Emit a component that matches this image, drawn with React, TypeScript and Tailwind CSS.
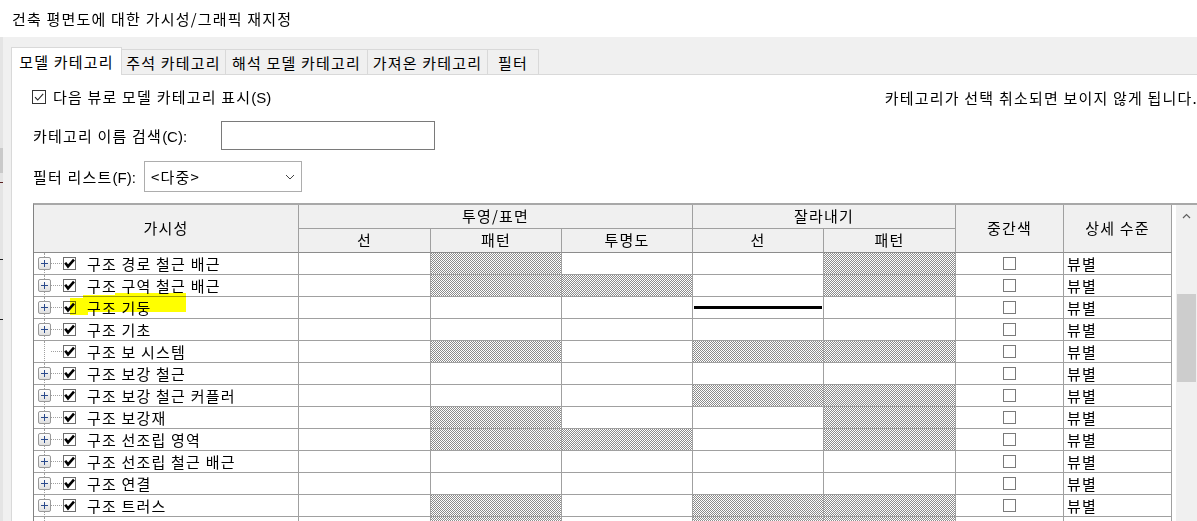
import React from "react";

type Row = {
  name: string;
  plus: boolean;
  hatch: number[];
  line?: boolean;
  mark?: boolean;
};

const rows: Row[] = [
  { name: "구조 경로 철근 배근", plus: true, hatch: [0, 1, 0, 0, 1] },
  { name: "구조 구역 철근 배근", plus: true, hatch: [0, 1, 1, 0, 1] },
  { name: "구조 기둥", plus: true, hatch: [0, 0, 0, 0, 0], line: true, mark: true },
  { name: "구조 기초", plus: true, hatch: [0, 0, 0, 0, 0] },
  { name: "구조 보 시스템", plus: false, hatch: [0, 1, 0, 1, 1] },
  { name: "구조 보강 철근", plus: true, hatch: [0, 0, 0, 0, 0] },
  { name: "구조 보강 철근 커플러", plus: true, hatch: [0, 0, 0, 1, 1] },
  { name: "구조 보강재", plus: true, hatch: [0, 1, 0, 0, 1] },
  { name: "구조 선조립 영역", plus: true, hatch: [0, 1, 1, 0, 1] },
  { name: "구조 선조립 철근 배근", plus: true, hatch: [0, 0, 0, 0, 0] },
  { name: "구조 연결", plus: true, hatch: [0, 0, 0, 0, 0] },
  { name: "구조 트러스", plus: true, hatch: [0, 1, 0, 1, 1] },
  { name: "구조 프레임", plus: true, hatch: [0, 1, 0, 1, 1] },
];

const cols = "grid grid-cols-[265px_132px_131px_131px_131px_132px_108px_108px]";
const cell = "border-r border-b border-[#a0a0a0]";
const latin = "tracking-normal font-['Liberation_Sans',sans-serif]";

const tabs = [
  { label: "모델 카테고리", w: "w-[111px]", active: true },
  { label: "주석 카테고리", w: "w-[105px]" },
  { label: "해석 모델 카테고리", w: "w-[143px]" },
  { label: "가져온 카테고리", w: "w-[121px]" },
  { label: "필터", w: "w-[52px]" },
];

const PlusBox = () => (
  <div className="w-[13px] h-[13px] border border-[#999] rounded-[2px] bg-gradient-to-b from-[#fdfdfd] to-[#e0e0e0] flex items-center justify-center">
    <svg width="9" height="9" viewBox="0 0 9 9">
      <path d="M4.5 1v7M1 4.5h7" stroke="#2a4a8c" strokeWidth="1" shapeRendering="crispEdges" />
    </svg>
  </div>
);

const RowCheck = () => (
  <div className="w-[13px] h-[13px] border border-[#6d6d6d] bg-white relative">
    <svg width="13" height="13" viewBox="0 0 13 13" className="absolute -left-[1px] -top-[1px]">
      <path d="M2.2 5.8L5 9.4L11 2.6" fill="none" stroke="#000" strokeWidth="2.6" />
    </svg>
  </div>
);

const Hatch = () => (
  <svg className="absolute inset-0 w-full h-full">
    <rect width="100%" height="100%" fill="url(#chk)" />
  </svg>
);

export default function App() {
  return (
    <div className="w-[1197px] h-[521px] overflow-hidden bg-white flex flex-col text-[15px] text-black tracking-[1.2px] font-['Noto_Sans_CJK_KR','Noto_Sans',sans-serif]">
      <svg width="0" height="0" className="absolute">
        <defs>
          <pattern id="chk" width="2" height="2" patternUnits="userSpaceOnUse">
            <rect width="2" height="2" fill="#ffffff" />
            <rect width="1" height="1" fill="#8c8c8c" />
            <rect x="1" y="1" width="1" height="1" fill="#8c8c8c" />
          </pattern>
        </defs>
      </svg>

      {/* title */}
      <div className="h-[37px] shrink-0 flex items-center pl-[12px] bg-white leading-none">
        건축 평면도에 대한 가시성/그래픽 재지정
      </div>

      <div className="flex-1 flex bg-[#f0f0f0] min-h-0">
        {/* strip of the window behind */}
        <div className="w-[11px] shrink-0 flex">
          <div className="w-[3px] bg-[#e4e4e4] flex flex-col">
            <div className="h-[111px]" />
            <div className="h-[25px] bg-[#c9c9c9]" />
            <div className="h-[9px]" />
            <div className="h-[1px] bg-[#5a2020]" />
            <div className="h-[76px]" />
            <div className="h-[1px] bg-[#202020]" />
            <div className="h-[59px]" />
            <div className="h-[1px] bg-[#202020]" />
          </div>
          <div className="flex-1" />
        </div>

        <div className="flex-1 flex flex-col min-w-0">
          {/* tabs */}
          <div className="h-[37px] shrink-0 flex items-end relative z-10">
            {tabs.map((t) =>
              t.active ? (
                <div
                  key={t.label}
                  className={`${t.w} h-[28px] -mb-[1px] bg-white border border-b-0 border-[#d9d9d9] flex items-center justify-center pb-[1px] leading-none whitespace-nowrap`}
                >
                  {t.label}
                </div>
              ) : (
                <div
                  key={t.label}
                  className={`${t.w} h-[25px] -ml-[1px] bg-[#f0f0f0] border border-b-0 border-[#d9d9d9] flex items-center justify-center leading-none whitespace-nowrap`}
                >
                  {t.label}
                </div>
              )
            )}
          </div>

          {/* panel */}
          <div className="flex-1 bg-white border-l border-t border-[#d9d9d9] flex flex-col min-h-0">
            <div className="mt-[11px] h-[22px] flex items-center justify-between -mr-[1px]">
              <div className="flex items-center pl-[20px] gap-[7px]">
                <div className="w-[14px] h-[14px] border border-[#333] bg-white flex items-center justify-center">
                  <svg width="12" height="12" viewBox="0 0 12 12">
                    <path d="M2 6.2L4.7 9L10.2 2.8" fill="none" stroke="#222" strokeWidth="1.1" />
                  </svg>
                </div>
                <span className="leading-none whitespace-nowrap">
                  다음 뷰로 모델 카테고리 표시<span className={latin}>(S)</span>
                </span>
              </div>
              <span className="leading-none whitespace-nowrap">카테고리가 선택 취소되면 보이지 않게 됩니다.</span>
            </div>

            <div className="mt-[13px] h-[29px] flex items-center pl-[21px]">
              <span className="w-[188px] shrink-0 leading-none whitespace-nowrap">
                카테고리 이름 검색<span className={latin}>(C):</span>
              </span>
              <div className="w-[214px] h-[29px] border border-[#7a7a7a] bg-white" />
            </div>

            <div className="mt-[11px] h-[31px] flex items-center pl-[21px]">
              <span className="w-[111px] shrink-0 leading-none whitespace-nowrap">
                필터 리스트<span className={latin}>(F):</span>
              </span>
              <div className="w-[158px] h-[31px] border border-[#adadad] bg-white flex items-center justify-between pl-[6px] pr-[6px]">
                <span className="leading-none">&lt;다중&gt;</span>
                <svg width="10" height="6" viewBox="0 0 10 6">
                  <path d="M1 1L5 5L9 1" fill="none" stroke="#444" strokeWidth="1" />
                </svg>
              </div>
            </div>

            {/* table */}
            <div className="mt-[11px] ml-[21px] flex-1 min-h-0 border-t-2 border-l border-t-[#a8a8a8] border-l-[#828282] flex overflow-hidden">
              <div className="w-[1138px] shrink-0 flex flex-col">
                <div className={`${cols} grid-rows-[24px_24px] bg-[#f0f0f0]`}>
                  <div className={`${cell} row-span-2 flex items-center justify-center border-b-[#8c8c8c]`}>가시성</div>
                  <div className={`${cell} col-span-3 flex items-center justify-center`}>투영/표면</div>
                  <div className={`${cell} col-span-2 flex items-center justify-center`}>잘라내기</div>
                  <div className={`${cell} row-span-2 flex items-center justify-center border-b-[#8c8c8c]`}>중간색</div>
                  <div className={`${cell} row-span-2 flex items-center justify-center border-b-[#8c8c8c]`}>상세 수준</div>
                  {["선", "패턴", "투명도", "선", "패턴"].map((h, i) => (
                    <div key={i} className={`${cell} flex items-center justify-center border-b-[#8c8c8c]`}>
                      {h}
                    </div>
                  ))}
                </div>

                {rows.map((r) => (
                  <div key={r.name} className={`${cols} grid-rows-[22px] h-[22px] shrink-0`}>
                    <div className={`${cell} relative flex items-center`}>
                      <div className="absolute left-[10px] top-0 bottom-[-1px] border-l border-dotted border-[#a0a0a0]" />
                      <div className="w-[4px]" />
                      <div className="relative w-[13px] h-[13px]">{r.plus && <PlusBox />}</div>
                      <div className="w-[11px] border-t border-dotted border-[#a0a0a0]" />
                      <div className="ml-[1px]">
                        <RowCheck />
                      </div>
                      <span className="ml-[11px] leading-none whitespace-nowrap">{r.name}</span>
                      {r.mark && (
                        <svg
                          width="116"
                          height="22"
                          viewBox="0 0 116 22"
                          className="absolute left-[36px] -top-[4px] mix-blend-multiply pointer-events-none"
                        >
                          <polygon
                            points="0,5 13,5 13,2 45,2 45,0 116,0 116,19 18,19 18,22 0,22"
                            fill="#ffff00"
                          />
                        </svg>
                      )}
                    </div>
                    {r.hatch.map((h, i) => (
                      <div key={i} className={`${cell} relative bg-white flex items-center overflow-hidden`}>
                        {h ? <Hatch /> : null}
                        {r.line && i === 3 && <div className="w-full mx-[1px] h-[3px] bg-black" />}
                      </div>
                    ))}
                    <div className={`${cell} flex items-center justify-center`}>
                      <div className="w-[13px] h-[13px] border border-[#7a7a7a] bg-white" />
                    </div>
                    <div className={`${cell} flex items-center pl-[3px] leading-none`}>뷰별</div>
                  </div>
                ))}
              </div>

              <div className="w-[4px] shrink-0 bg-white" />
              <div className="flex-1 bg-[#f0f0f0] flex flex-col">
                <div className="h-[21px] flex items-center justify-center">
                  <svg width="9" height="6" viewBox="0 0 9 6">
                    <path d="M1 5L4.5 1.5L8 5" fill="none" stroke="#606060" strokeWidth="1.2" />
                  </svg>
                </div>
                <div className="mt-[68px] h-[88px] mx-[1px] bg-[#cdcdcd]" />
              </div>
            </div>
          </div>
        </div>
      </div>
    </div>
  );
}
